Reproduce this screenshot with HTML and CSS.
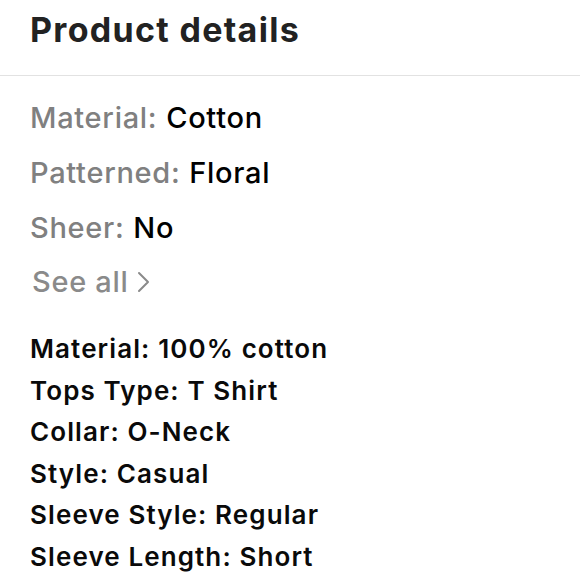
FILE: index.html
```html
<!DOCTYPE html>
<html>
<head>
<meta charset="utf-8">
<link rel="stylesheet" href="styles.css">
</head>
<body>
<div class="page">
  <div class="header"><h1 class="title">Product details</h1></div>
  <div class="attrs">
    <div class="attr"><span class="label">Material:</span> <span class="value">Cotton</span></div>
    <div class="attr"><span class="label">Patterned:</span> <span class="value">Floral</span></div>
    <div class="attr"><span class="label">Sheer:</span> <span class="value">No</span></div>
    <div class="see-all">See all <svg class="chev" width="13" height="22" viewBox="0 0 13 22"><path d="M2 2 L11 11 L2 20" fill="none" stroke="#8a8a8a" stroke-width="2" stroke-linecap="round" stroke-linejoin="round"/></svg></div>
  </div>
  <ul class="specs">
    <li>Material: 100% cotton</li>
    <li>Tops Type: T Shirt</li>
    <li>Collar: O-Neck</li>
    <li>Style: Casual</li>
    <li>Sleeve Style: Regular</li>
    <li>Sleeve Length: Short</li>
  </ul>
</div>
</body>
</html>
```
FILE: styles.css
```css
html, body { margin: 0; padding: 0; background: #fff; }
body { font-family: Inter, "Liberation Sans", sans-serif; width: 580px; height: 580px; overflow: hidden; }
.page { display: flex; flex-direction: column; }
.header { height: 76px; border-bottom: 1px solid #e2e2e2; padding-left: 30px; display: flex; align-items: center; box-sizing: border-box; }
.title { margin: 0; font-size: 34px; font-weight: 700; color: #222; letter-spacing: 1.3px; position: relative; top: -8px; }
.attrs { padding: 14px 30px 0; display: flex; flex-direction: column; }
.attr { height: 55px; line-height: 55px; font-size: 29px; letter-spacing: 0.7px; }
.label { color: #808080; font-weight: 500; }
.value { color: #000; font-weight: 500; }
.see-all { height: 53px; line-height: 53px; font-size: 29px; letter-spacing: 0.7px; color: #8a8a8a; font-weight: 500; display: flex; align-items: center; gap: 8px; padding-left: 2px; }
.specs { list-style: none; margin: 0; padding: 20px 30px 0; }
.specs li { height: 41.5px; line-height: 41.5px; font-size: 26px; letter-spacing: 1.1px; font-weight: 600; color: #0a0a0a; }
```
